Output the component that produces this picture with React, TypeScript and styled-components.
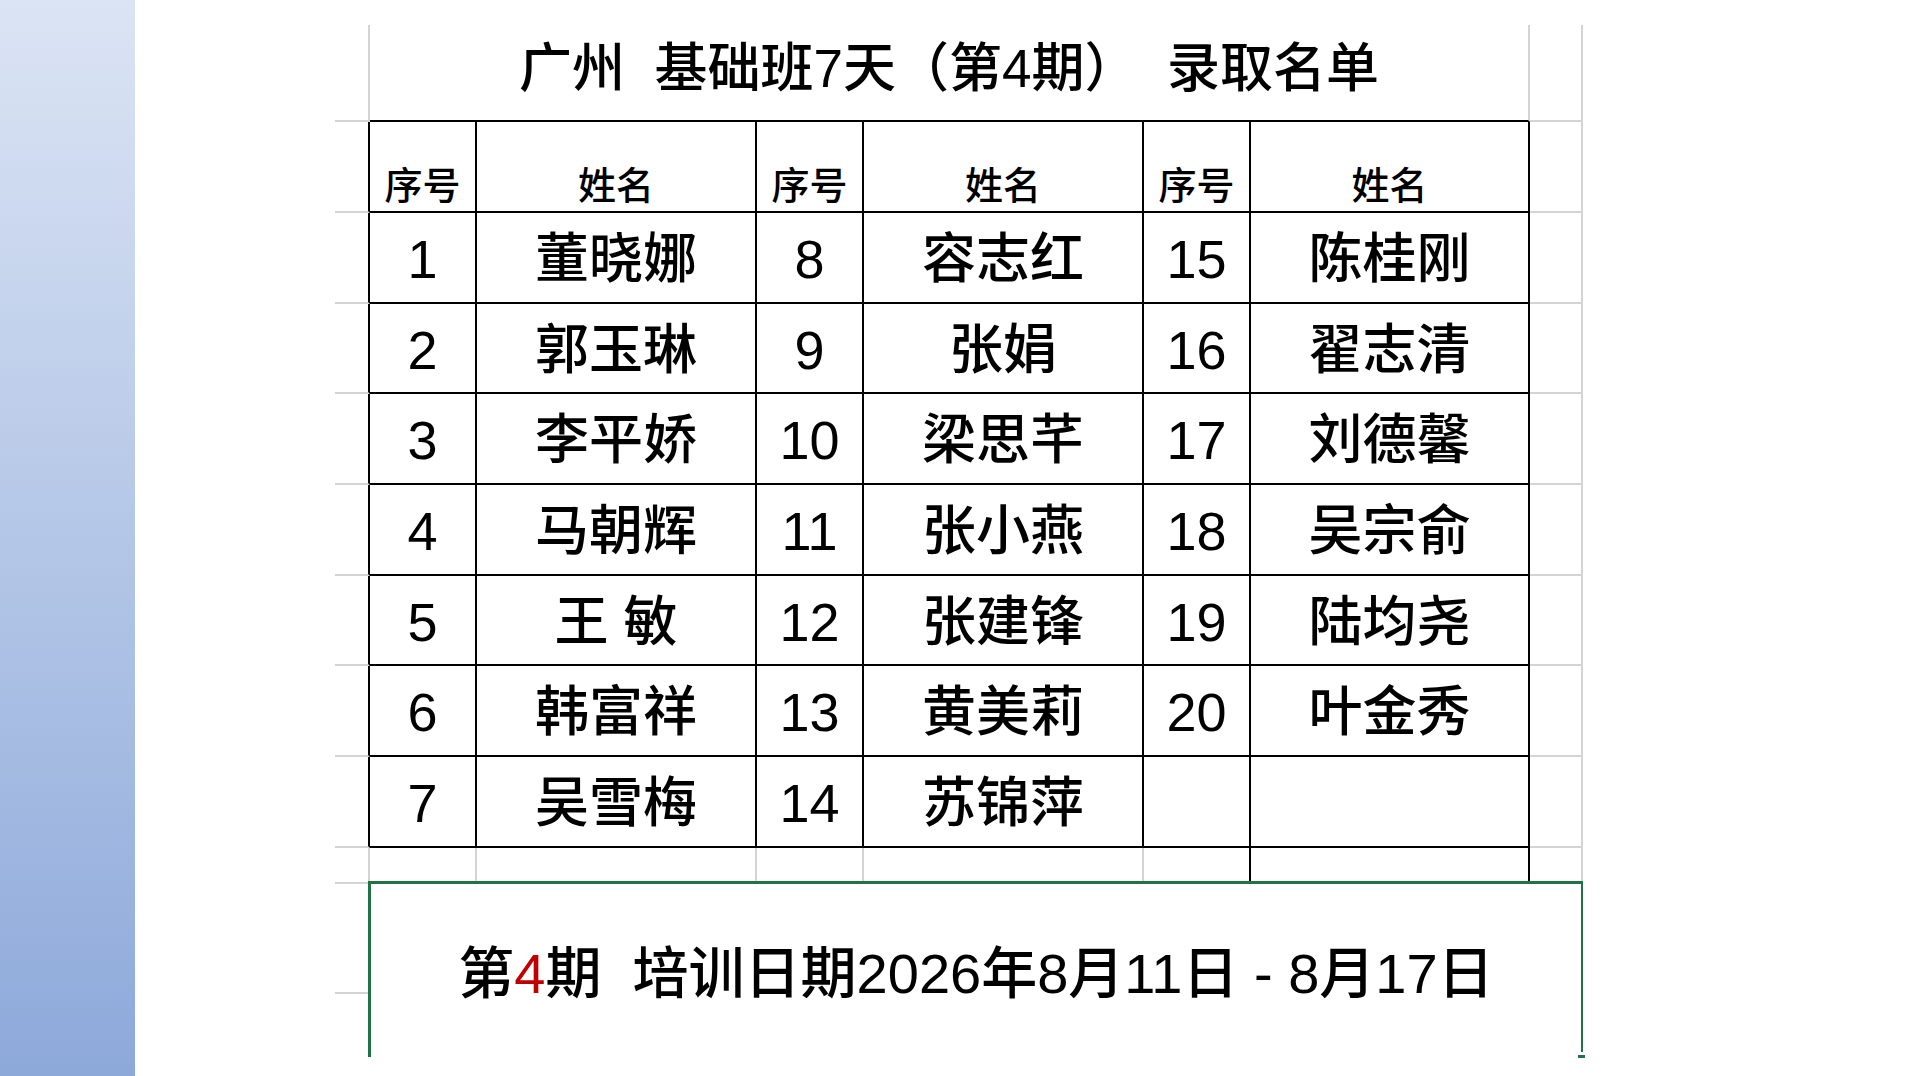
import React from 'react';
import styled, { createGlobalStyle } from 'styled-components';

const GlobalStyle = createGlobalStyle`
  html, body { margin: 0; padding: 0; background: #ffffff; }
  body {
    font-family: "Liberation Sans", "Noto Sans CJK SC", sans-serif;
    font-weight: 500;
    color: #000000;
  }
`;

type Line = 'k' | 'g' | 'n';
const lineColor = (l: Line) => (l === 'k' ? '#000000' : l === 'g' ? '#d4d4d4' : 'transparent');

const Page = styled.div`
  display: flex;
  width: 1917px;
  height: 1076px;
  overflow: hidden;
  background: #ffffff;
`;

const SidePanel = styled.aside`
  flex: none;
  width: 135px;
  height: 100%;
  background: linear-gradient(180deg, #dbe4f4 0%, #8da9da 100%);
`;

const SheetArea = styled.main`
  flex: 1;
  padding: 25px 0 0 200px;
`;

const Sheet = styled.div`
  display: grid;
  grid-template-columns: 35px 107px 280px 107px 280px 107px 279px 53px;
  grid-template-rows: 97px 91px 91px 90px 91px 91px 90px 91px 91px 36px 110px 63px;
`;

const Cell = styled.div<{ $r: Line; $b: Line; $span?: number }>`
  box-sizing: border-box;
  grid-column: span ${(p) => p.$span ?? 1};
  border-right: 2px solid ${(p) => lineColor(p.$r)};
  border-bottom: 2px solid ${(p) => lineColor(p.$b)};
  display: flex;
  justify-content: center;
  align-items: center;
  white-space: pre;
  line-height: 1;
`;

const TitleCell = styled(Cell)`
  font-size: 53px;
  padding-bottom: 8px;
`;

const HeadCell = styled(Cell)`
  font-size: 38px;
  align-items: flex-end;
  padding-bottom: 6px;
`;

const DataCell = styled(Cell)`
  font-size: 54px;
  padding-top: 3px;
`;

const GreenBox = styled.div`
  position: relative;
  box-sizing: border-box;
  grid-column: 2 / span 7;
  grid-row: 11 / span 2;
  margin: -3px 0 0 -2px;
  border-top: 3px solid #217346;
  border-left: 3px solid #217346;
  border-right: 2px solid #217346;
  display: flex;
  justify-content: center;
  align-items: center;
  padding-top: 6px;
  font-size: 56px;
  line-height: 1;
  white-space: pre;
`;

const FillHandle = styled.span`
  position: absolute;
  right: -4px;
  bottom: -1px;
  width: 7px;
  height: 3px;
  background: #217346;
  box-shadow: 0 -3px 0 #ffffff;
`;

const Red = styled.span`
  color: #c00000;
`;

const groups = [
  {
    start: 1,
    names: ['董晓娜', '郭玉琳', '李平娇', '马朝辉', '王 敏', '韩富祥', '吴雪梅'],
  },
  {
    start: 8,
    names: ['容志红', '张娟', '梁思芊', '张小燕', '张建锋', '黄美莉', '苏锦萍'],
  },
  {
    start: 15,
    names: ['陈桂刚', '翟志清', '刘德馨', '吴宗俞', '陆均尧', '叶金秀', ''],
  },
];

export default function App() {
  const rows = Array.from({ length: 7 }, (_, i) => i);
  return (
    <>
      <GlobalStyle />
      <Page>
        <SidePanel />
        <SheetArea>
          <Sheet>
            {/* title row */}
            <Cell $r="g" $b="g" />
            <TitleCell $r="g" $b="k" $span={6}>
              {'广州  基础班7天（第4期）  录取名单'}
            </TitleCell>
            <Cell $r="g" $b="g" />

            {/* header row */}
            <Cell $r="k" $b="g" />
            {groups.map((g) => (
              <React.Fragment key={`h${g.start}`}>
                <HeadCell $r="k" $b="k">序号</HeadCell>
                <HeadCell $r="k" $b="k">姓名</HeadCell>
              </React.Fragment>
            ))}
            <Cell $r="g" $b="g" />

            {/* data rows */}
            {rows.map((i) => (
              <React.Fragment key={`r${i}`}>
                <Cell $r="k" $b="g" />
                {groups.map((g) => (
                  <React.Fragment key={`c${g.start}`}>
                    <DataCell $r="k" $b="k">{g.names[i] ? String(g.start + i) : ''}</DataCell>
                    <DataCell $r="k" $b="k">{g.names[i]}</DataCell>
                  </React.Fragment>
                ))}
                <Cell $r="g" $b="g" />
              </React.Fragment>
            ))}

            {/* partial row under table */}
            <Cell $r="g" $b="g" />
            <Cell $r="g" $b="n" />
            <Cell $r="g" $b="n" />
            <Cell $r="g" $b="n" />
            <Cell $r="g" $b="n" />
            <Cell $r="k" $b="n" />
            <Cell $r="k" $b="n" />
            <Cell $r="g" $b="n" />

            {/* green selected merged cell */}
            <Cell $r="n" $b="g" />
            <GreenBox>
              第<Red>4</Red>期{'  培训日期2026年8月11日 - 8月17日'}
              <FillHandle />
            </GreenBox>
            <Cell $r="n" $b="n" />
          </Sheet>
        </SheetArea>
      </Page>
    </>
  );
}
